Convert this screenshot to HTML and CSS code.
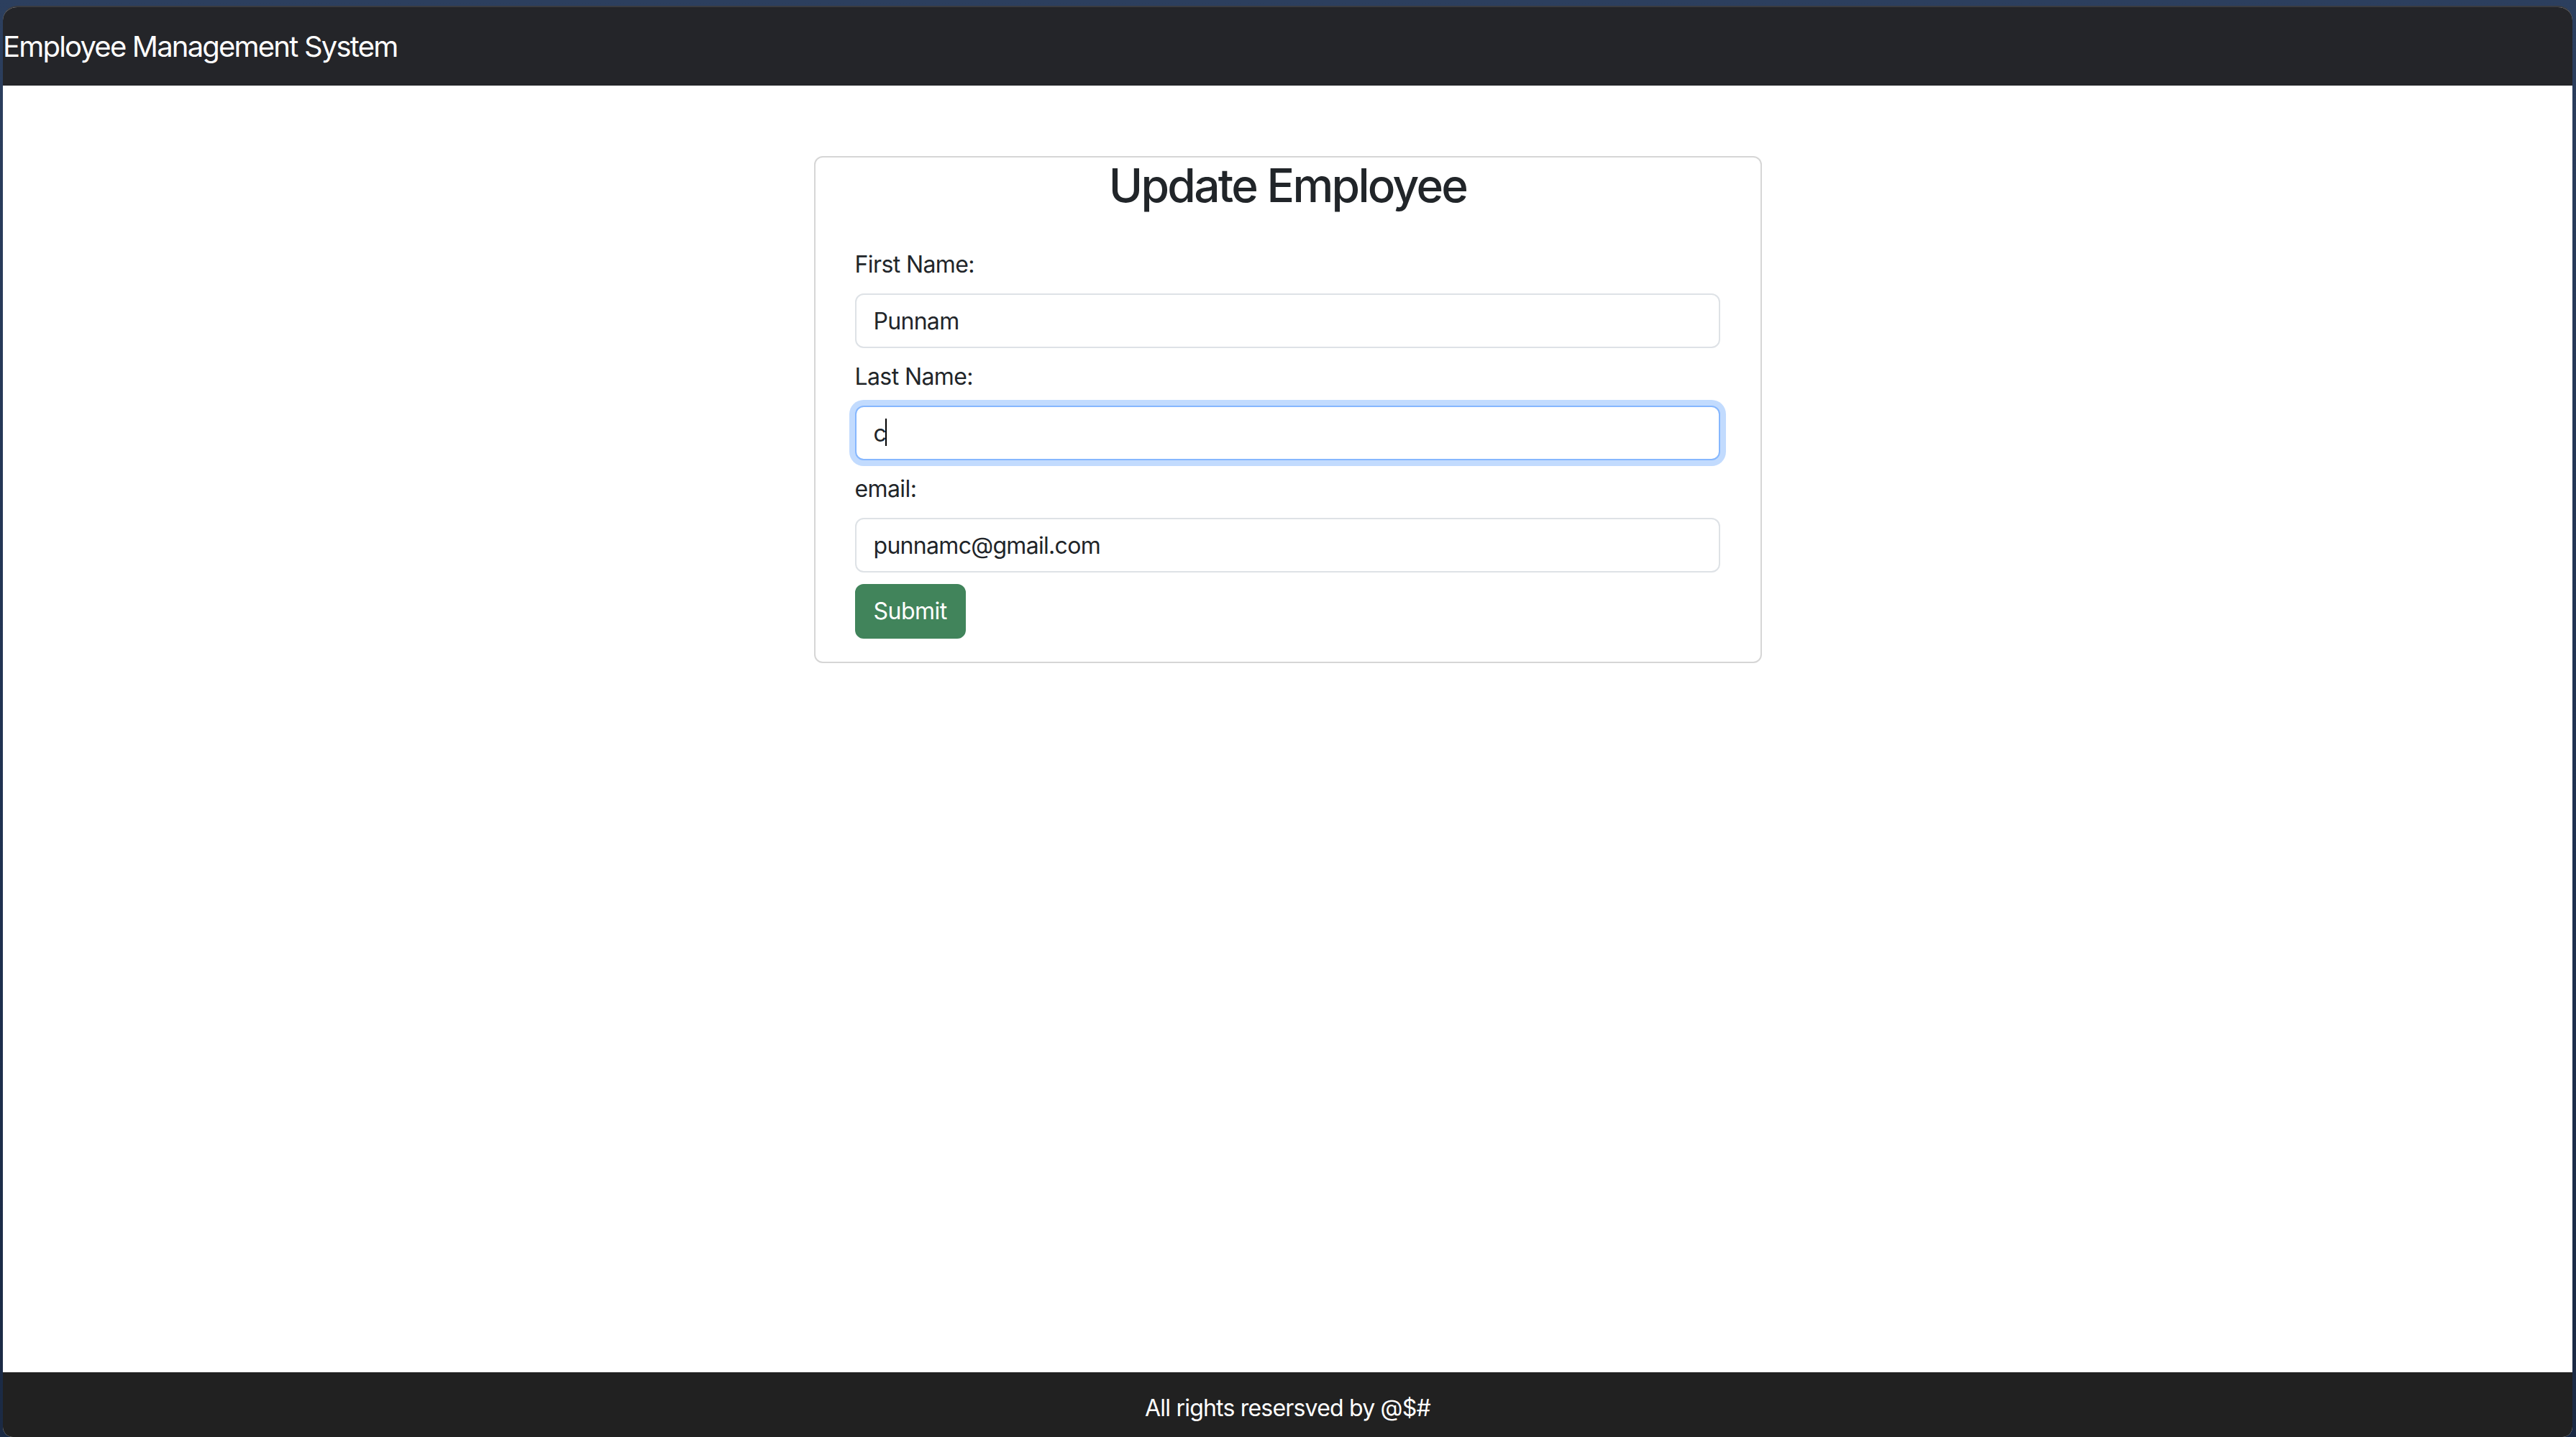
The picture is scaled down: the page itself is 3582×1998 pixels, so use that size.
FILE: index.html
```html
<!DOCTYPE html>
<html lang="en">
<head>
<meta charset="utf-8">
<title>Employee Management System</title>
<link rel="stylesheet" href="styles.css">
</head>
<body>
<div class="window">
  <header class="navbar">
    <span class="brand">Employee Management System</span>
  </header>
  <main class="content">
    <div class="card">
      <h2 class="card-title">Update Employee</h2>
      <form class="card-body">
        <div class="field">
          <label class="label" for="fn">First Name:</label>
          <input class="input" id="fn" type="text" value="Punnam">
        </div>
        <div class="field">
          <label class="label" for="ln">Last Name:</label>
          <div class="input-wrap">
            <input class="input input-focus" id="ln" type="text" value="c">
            <span class="caret"></span>
          </div>
        </div>
        <div class="field">
          <label class="label" for="em">email:</label>
          <input class="input" id="em" type="text" value="punnamc@gmail.com">
        </div>
        <button class="btn" type="button">Submit</button>
      </form>
    </div>
  </main>
  <footer class="footer">All rights resersved by @$#</footer>
</div>
</body>
</html>
```

FILE: styles.css
```css
* { box-sizing: border-box; }
html, body { height: 100%; }
body {
  margin: 0;
  background: linear-gradient(180deg, #2c3f5e 0%, #1f3150 60%, #1b2a44 100%);
  font-family: "Inter", "Roboto", "Liberation Sans", sans-serif;
  color: #212529;
  overflow: hidden;
}
.window {
  margin: 8px 5px 0 4px;
  height: calc(100vh - 8px);
  border-radius: 20px 20px 14px 14px;
  overflow: hidden;
  display: flex;
  flex-direction: column;
  background: #fff;
  border-top: 2px solid #3a3b40;
}
.navbar {
  background: #242529;
  height: 109px;
  display: flex;
  align-items: center;
  flex-shrink: 0;
}
.brand {
  color: #fff;
  font-size: 40px;
  line-height: 60px;
  letter-spacing: -1.8px;
}
.content {
  flex: 1;
  background: #fff;
  padding-top: 98px;
}
.card {
  width: 1318px;
  margin: 0 auto;
  border: 2px solid #d6d6d6;
  border-radius: 12px;
  background: #fff;
}
.card-title {
  margin: 0 0 16px;
  text-align: center;
  font-size: 64px;
  line-height: 77px;
  font-weight: 500;
  letter-spacing: -2.7px;
  color: #212529;
}
.card-body {
  padding: 32px 56px 32px 55px;
  display: flex;
  flex-direction: column;
  align-items: flex-start;
}
.field {
  width: 100%;
  display: flex;
  flex-direction: column;
  margin-bottom: 16px;
}
.label {
  font-size: 32px;
  line-height: 48px;
  margin-bottom: 16px;
  color: #212529;
  letter-spacing: -0.6px;
}
.input-wrap { position: relative; width: 100%; }
.input {
  width: 100%;
  height: 76px;
  padding: 12px 24px;
  font-family: inherit;
  font-size: 32px;
  line-height: 48px;
  color: #212529;
  background: #fff;
  border: 2px solid #dee2e6;
  border-radius: 12px;
  outline: none;
  letter-spacing: -0.7px;
}
.input-focus {
  border-color: #86b7fe;
  box-shadow: 0 0 0 8px rgba(13, 110, 253, 0.25);
}
.caret {
  position: absolute;
  left: 42px;
  top: 18px;
  width: 2px;
  height: 38px;
  background: #000;
}
.btn {
  height: 76px;
  padding: 12px 24px;
  font-family: inherit;
  font-size: 32px;
  line-height: 48px;
  color: #fff;
  background: #41845b;
  border: 2px solid #41845b;
  border-radius: 12px;
  letter-spacing: -0.5px;
}
.footer {
  flex-shrink: 0;
  height: 90px;
  background: #212121;
  color: #fff;
  text-align: center;
  font-size: 32px;
  line-height: 48px;
  padding-top: 26px;
  letter-spacing: -0.8px;
}
```
